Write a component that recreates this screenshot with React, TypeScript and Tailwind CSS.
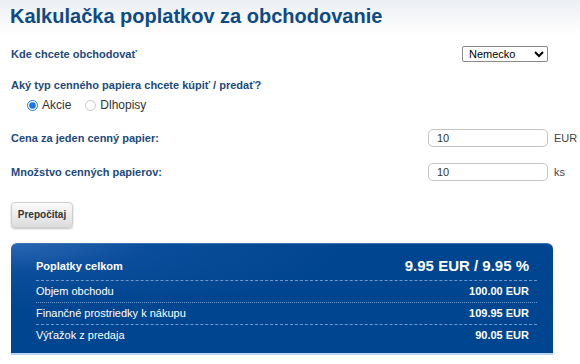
import React, { useState } from 'react';

const rows = [
  { label: 'Objem obchodu', value: '100.00 EUR', line: 'border-dotted' },
  { label: 'Finančné prostriedky k nákupu', value: '109.95 EUR', line: 'border-dashed' },
  { label: 'Výťažok z predaja', value: '90.05 EUR', line: '' },
];

export default function App() {
  const [type, setType] = useState('akcie');
  const [price, setPrice] = useState('10');
  const [qty, setQty] = useState('10');

  return (
    <div className="w-[580px] h-[364px] overflow-hidden bg-white font-['Liberation_Sans',Arial,sans-serif] text-[#333]">
      {/* Header */}
      <div className="h-[36px] bg-gradient-to-b from-[#eceff3] to-white px-[10px] pt-[4px]">
        <h1 className="text-[20px] font-bold leading-[24px] text-[#0d4a86]">
          Kalkulačka poplatkov za obchodovanie
        </h1>
      </div>

      <div className="px-[11px]">
        {/* Market */}
        <div className="flex items-center justify-between pr-[21px] pt-[10px]">
          <span className="text-[11px] font-bold text-[#1c4a7c]">Kde chcete obchodovať</span>
          <select className="w-[86px] h-[16px] border border-[#8a8a8a] rounded-[2px] text-[11px] leading-[14px] pl-[2px] text-black bg-white">
            <option>Nemecko</option>
          </select>
        </div>

        {/* Type */}
        <div className="pt-[14px] text-[11px] font-bold text-[#1c4a7c]">
          Aký typ cenného papiera chcete kúpiť / predať?
        </div>
        <div className="flex items-center gap-[6px] pl-[16px] pt-[3px] text-[12px] text-[#333]">
          <label className="flex items-center gap-[4px]">
            <input
              type="radio"
              checked={type === 'akcie'}
              onChange={() => setType('akcie')}
              className="w-[11px] h-[11px] m-0 accent-[#1a73e8]"
            />
            Akcie
          </label>
          <label className="flex items-center gap-[4px] ml-[8px]">
            <input
              type="radio"
              checked={type === 'dlhopisy'}
              onChange={() => setType('dlhopisy')}
              className="w-[11px] h-[11px] m-0 opacity-40"
            />
            Dlhopisy
          </label>
        </div>

        {/* Price */}
        <div className="flex items-center pt-[15px]">
          <span className="flex-1 text-[11px] font-bold text-[#1c4a7c]">Cena za jeden cenný papier:</span>
          <input
            value={price}
            onChange={(e) => setPrice(e.target.value)}
            className="w-[120px] h-[18px] border border-[#c4c4c4] rounded-[5px] px-[8px] text-[11px] text-[#333] outline-none"
          />
          <span className="w-[21px] pl-[6px] whitespace-nowrap text-[11px] text-[#444]">EUR</span>
        </div>

        {/* Quantity */}
        <div className="flex items-center pt-[16px]">
          <span className="flex-1 text-[11px] font-bold text-[#1c4a7c]">Množstvo cenných papierov:</span>
          <input
            value={qty}
            onChange={(e) => setQty(e.target.value)}
            className="w-[120px] h-[18px] border border-[#c4c4c4] rounded-[5px] px-[8px] text-[11px] text-[#333] outline-none"
          />
          <span className="w-[21px] pl-[6px] whitespace-nowrap text-[11px] text-[#444]">ks</span>
        </div>

        {/* Button */}
        <div className="pt-[20px]">
          <button className="w-[62px] h-[26px] rounded-[4px] border border-[#cfcfcf] bg-gradient-to-b from-[#fbfbfb] to-[#dcdcdc] shadow-[0_1px_2px_rgba(0,0,0,0.25)] text-[10px] font-bold text-[#333]">
            Prepočitaj
          </button>
        </div>

        {/* Results */}
        <div className="mt-[15px] w-[542px] rounded-t-[6px] border-t border-[#3c74b8] border-b-[2px] border-b-[#bcd6f0] bg-[radial-gradient(ellipse_at_0%_0%,#2a66b4_0%,#0a4d9a_18%,#004590_45%)] pl-[25px] pr-[16px] pb-[6px] pt-[10px] text-white">
          <div className="flex items-center justify-between h-[27px] border-b border-dashed border-[#6f98cc]">
            <span className="text-[11px] font-bold">Poplatky celkom</span>
            <span className="text-[15px] font-bold pr-[8px]">9.95 EUR / 9.95 %</span>
          </div>
          {rows.map((r) => (
            <div
              key={r.label}
              className={`flex items-center justify-between h-[22px] ${r.line ? 'border-b border-[#6f98cc] ' + r.line : ''}`}
            >
              <span className="text-[11px]">{r.label}</span>
              <span className="text-[11px] font-bold pr-[8px]">{r.value}</span>
            </div>
          ))}
        </div>
      </div>
    </div>
  );
}
